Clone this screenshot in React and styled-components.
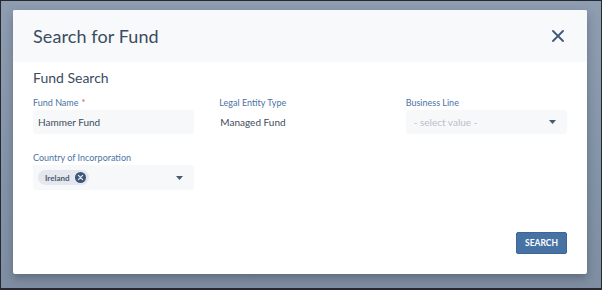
import React from 'react';
import styled, { createGlobalStyle } from 'styled-components';

const GlobalStyle = createGlobalStyle`
  html, body {
    margin: 0;
    padding: 0;
  }
  body {
    font-family: Lato, "Noto Sans", sans-serif;
  }
`;

const Page = styled.div`
  box-sizing: border-box;
  width: 602px;
  height: 290px;
  border: 1px solid #262a30;
  border-bottom-width: 2px;
  background: linear-gradient(180deg, #8f9db0 0%, #8494a8 60%, #7f8ea2 100%);
  padding: 9px 14px 0 12px;
  overflow: hidden;
`;

const Modal = styled.div`
  width: 574px;
  height: 264px;
  background: #ffffff;
  border-radius: 2px;
  box-shadow: 0 4px 10px rgba(30, 40, 55, 0.35);
  display: flex;
  flex-direction: column;
`;

const Header = styled.div`
  height: 52px;
  background: #f7f9fb;
  display: flex;
  align-items: center;
  justify-content: space-between;
  padding: 0 20px;
  border-radius: 2px 2px 0 0;
`;

const Title = styled.h2`
  margin: 0;
  font-size: 18px;
  font-weight: 400;
  color: #3b4c60;
  letter-spacing: 0.1px;
`;

const CloseButton = styled.button`
  border: 0;
  background: none;
  padding: 0;
  margin-right: 2px;
  width: 14px;
  height: 14px;
  display: flex;
  align-items: center;
  justify-content: center;
  cursor: pointer;
`;

const Body = styled.div`
  flex: 1;
  display: flex;
  flex-direction: column;
  padding: 7px 20px 20px;
`;

const SectionTitle = styled.h3`
  margin: 0 0 11px;
  font-size: 14px;
  line-height: 17px;
  font-weight: 400;
  color: #3b4c60;
`;

const FormGrid = styled.div`
  display: grid;
  grid-template-columns: repeat(3, 1fr);
  column-gap: 25px;
  row-gap: 18px;
`;

const Field = styled.div`
  display: flex;
  flex-direction: column;
`;

const Label = styled.label`
  font-size: 9px;
  color: #4c72a6;
  margin-bottom: 1px;
  line-height: 12px;
`;

const Required = styled.span`
  color: #e0484a;
  margin-left: 3px;
`;

const Input = styled.div`
  box-sizing: border-box;
  height: ${p => (p.tall ? 25 : 24)}px;
  background: ${p => (p.plain ? 'transparent' : '#f6f8fa')};
  border-radius: 3px;
  display: flex;
  align-items: center;
  justify-content: space-between;
  padding: ${p => (p.plain ? '0 1px' : p.placeholder ? '0 11px 0 8px' : '0 11px 0 5px')};
  font-size: 10px;
  color: ${p => (p.placeholder ? '#b8c1cc' : '#3e4b5c')};
`;

const Chip = styled.span`
  display: inline-flex;
  align-items: center;
  gap: 5px;
  height: 15px;
  padding: 0 3px 0 7px;
  background: #e4e8ee;
  border-radius: 8px;
  font-size: 8px;
  font-weight: 700;
  color: #4a5a6d;
`;

const Footer = styled.div`
  margin-top: auto;
  display: flex;
  justify-content: flex-end;
`;

const SearchButton = styled.button`
  width: 51px;
  height: 22px;
  border: 1px solid #3c6698;
  border-radius: 2px;
  background: #4672a4;
  color: #ffffff;
  font-family: Lato, "Noto Sans", sans-serif;
  font-size: 8.5px;
  font-weight: 700;
  padding: 0;
  cursor: pointer;
`;

const Caret = () => (
  <svg width="7" height="4" viewBox="0 0 7 4">
    <path d="M0 0 H7 L3.5 4 Z" fill="#4a5a6d" />
  </svg>
);

const ClearIcon = () => (
  <svg width="11" height="11" viewBox="0 0 11 11">
    <circle cx="5.5" cy="5.5" r="5.5" fill="#3d5579" />
    <path d="M3.4 3.4 L7.6 7.6 M7.6 3.4 L3.4 7.6" stroke="#e4e8ee" strokeWidth="1.3" strokeLinecap="round" />
  </svg>
);

export default function App() {
  return (
    <>
      <GlobalStyle />
      <Page>
        <Modal>
          <Header>
            <Title>Search for Fund</Title>
            <CloseButton aria-label="Close">
              <svg width="12" height="12" viewBox="0 0 12 12">
                <path d="M1 1 L11 11 M11 1 L1 11" stroke="#3f5877" strokeWidth="1.8" strokeLinecap="round" />
              </svg>
            </CloseButton>
          </Header>
          <Body>
            <SectionTitle>Fund Search</SectionTitle>
            <FormGrid>
              <Field>
                <Label>Fund Name<Required>*</Required></Label>
                <Input>Hammer Fund</Input>
              </Field>
              <Field>
                <Label>Legal Entity Type</Label>
                <Input plain>Managed Fund</Input>
              </Field>
              <Field>
                <Label>Business Line</Label>
                <Input placeholder>
                  - select value -
                  <Caret />
                </Input>
              </Field>
              <Field>
                <Label>Country of Incorporation</Label>
                <Input tall>
                  <Chip>
                    Ireland
                    <ClearIcon />
                  </Chip>
                  <Caret />
                </Input>
              </Field>
            </FormGrid>
            <Footer>
              <SearchButton>SEARCH</SearchButton>
            </Footer>
          </Body>
        </Modal>
      </Page>
    </>
  );
}
